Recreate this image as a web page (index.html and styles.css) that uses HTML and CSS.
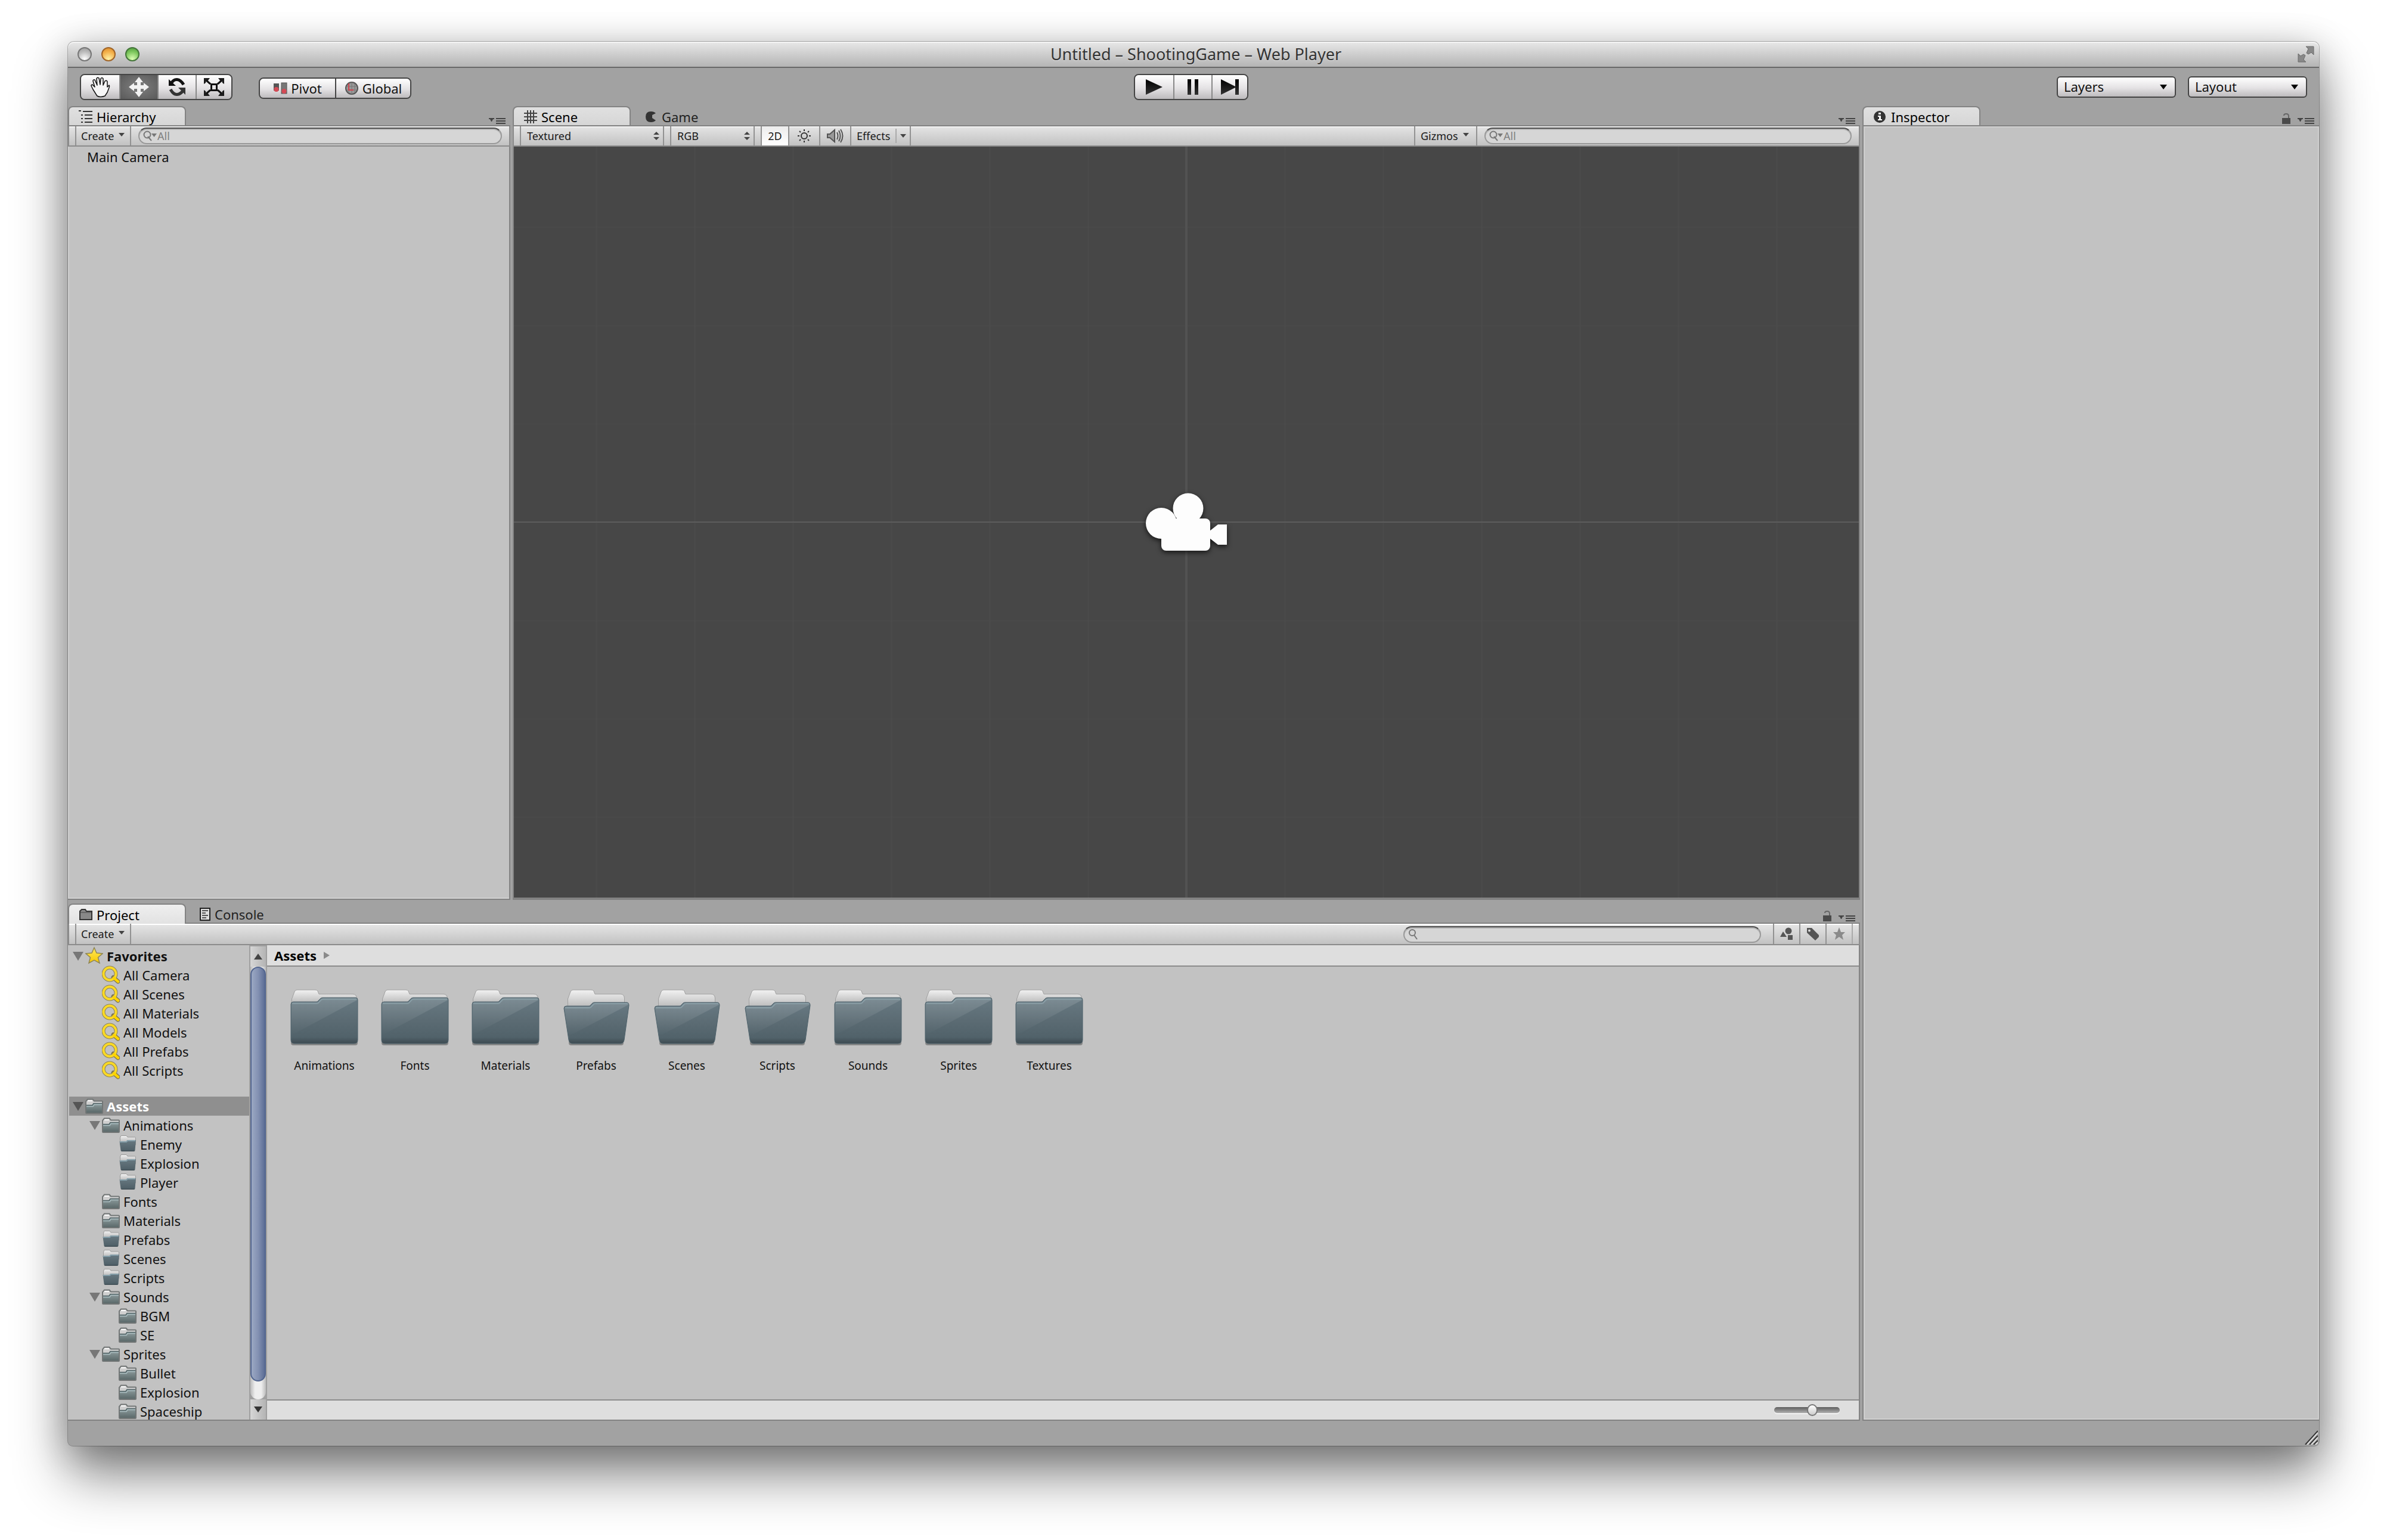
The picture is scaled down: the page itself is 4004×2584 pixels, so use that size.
FILE: index.html
```html
<!DOCTYPE html>
<html lang="en">
<head>
<meta charset="utf-8">
<title>Untitled – ShootingGame – Web Player</title>
<link rel="stylesheet" href="styles.css">
</head>
<body>
<svg class="defs" aria-hidden="true">
  <defs>
    <linearGradient id="paper" x1="0" y1="0" x2="0" y2="1"><stop offset="0" stop-color="#f2f2f2"/><stop offset="1" stop-color="#a4a4a4"/></linearGradient>
    <linearGradient id="slate" x1="0" y1="0" x2="0" y2="1"><stop offset="0" stop-color="#687a83"/><stop offset=".5" stop-color="#5b6b73"/><stop offset=".86" stop-color="#51626a"/><stop offset="1" stop-color="#3d4a51"/></linearGradient>
    <linearGradient id="shine" x1="0" y1="0" x2="0" y2="1"><stop offset="0" stop-color="#fff" stop-opacity=".14"/><stop offset="1" stop-color="#fff" stop-opacity="0"/></linearGradient>
    <linearGradient id="slate-small" x1="0" y1="0" x2="0" y2="1"><stop offset="0" stop-color="#8b9a9b"/><stop offset="1" stop-color="#5b696a"/></linearGradient>
    <linearGradient id="gold" x1="0" y1="0" x2="0" y2="1"><stop offset="0" stop-color="#ffe95c"/><stop offset="1" stop-color="#f7c800"/></linearGradient>
    <linearGradient id="ink" x1="0" y1="0" x2="0" y2="1"><stop offset="0" stop-color="#000"/><stop offset="1" stop-color="#333"/></linearGradient>
  </defs>
  <symbol id="folder" viewBox="0 0 128 128">
    <rect x="8" y="104" width="112" height="8" rx="4" fill="#000" opacity=".3"/>
    <path d="M9.500 50V34L14 22q1-3 4-3H49q3 0 4 2l2 5H112q6 0 6.500 7V50Z" fill="url(#paper)" stroke="#a0a0a0"/>
    <path d="M8 43q0-4 4-4H51q2 0 3-2l3-3q1-2 4-2H117q3 0 3 4V103q0 6-6 6H14q-6 0-6-6Z" fill="url(#slate)" stroke="#4f636c" stroke-width="1"/>
    <path d="M9 43q0-3 3-3H52q2 0 3-2l3-3q1-2 4-2H116q3 0 3 3L9 95Z" fill="url(#shine)"/>
    <path d="M10 41.500H52q2 0 4-3l2-2q1-2 4-2H118" fill="none" stroke="#8fa4ad" stroke-width="2" opacity=".8"/>
  </symbol>
  <symbol id="folder-open" viewBox="0 0 128 128">
    <rect x="18" y="104" width="92" height="8" rx="4" fill="#000" opacity=".3"/>
    <path d="M16.500 60V34L21 22q1-3 4-3H56q3 0 4 2l2 5H105q6 0 6.500 7V60Z" fill="url(#paper)" stroke="#a0a0a0"/>
    <path d="M10 50q0-4 4-4H52q2 0 3-2l2-2q1-2 4-2H115q4 0 4 5L111 103q-1 6-6 6H24q-5 0-6-6Z" fill="url(#slate)" stroke="#4f636c" stroke-width="1"/>
    <path d="M11 50q0-3 3-3H53q2 0 3-2l2-2q1-2 4-2H114q4 0 4 3L17 97Z" fill="url(#shine)"/>
    <path d="M12 49H53q2 0 4-3l2-2q1-2 4-2H117" fill="none" stroke="#8fa4ad" stroke-width="2" opacity=".8"/>
  </symbol>
  <symbol id="folder-sm" viewBox="0 0 30 32">
    <path d="M1 27V8L4 4.500H12.500L15 7.500H28q1 0 1 1V27q0 1-1 1H2q-1 0-1-1Z" fill="#d0d0d0" stroke="#727676" stroke-width="2"/>
    <path d="M2 15H12l2-3H28V27H2Z" fill="url(#slate-small)"/>
    <path d="M2 14.500H12l2-3H28" fill="none" stroke="#4d6063" stroke-width="1.500"/>
    <path d="M2 16.500H13l2-3H28" fill="none" stroke="#a9bcbf" stroke-width="1.500"/>
    <path d="M4 7H12" stroke="#fafafa" stroke-width="2"/>
  </symbol>
  <symbol id="folder-sm-open" viewBox="0 0 30 32">
    <path d="M2.500 17V5L4 1.500H13L15 4H27.500q1 0 1 2V17Z" fill="url(#paper)" stroke="#9a9a9a"/>
    <path d="M1.500 11H13l2-2H29L27.500 26q0 2-2 2H5.500q-2 0-2-2Z" fill="url(#slate)"/>
    <path d="M2 12H13l2-2H28" fill="none" stroke="#86a0ab" stroke-width="2"/>
  </symbol>
  <symbol id="mag" viewBox="0 0 30 32">
    <path d="M19 20L27 27" stroke="#7d7550" stroke-width="7" stroke-linecap="round"/>
    <circle cx="13" cy="14" r="10.500" fill="none" stroke="#8a8260" stroke-width="6"/>
    <circle cx="13" cy="14" r="10.500" fill="none" stroke="#f9d926" stroke-width="4"/>
    <path d="M20 21L27 27" stroke="#fdd400" stroke-width="4.500" stroke-linecap="round"/>
  </symbol>
  <symbol id="open-arrow" viewBox="0 0 22 32"><path d="M1 9H19L10 24Z" fill="currentColor"/></symbol>
  <symbol id="menu" viewBox="0 0 28 18"><path d="M0 8H9V10H7L5 14H4L2 10H0ZM12 8H28V10H12ZM12 12H28V14H12ZM12 16H28V18H12Z" fill="#444"/></symbol>
  <symbol id="lock" viewBox="0 0 14 18"><path d="M0 8H14V18H0Z" fill="#4a4a4a"/><path d="M3 4Q3 1 7 1T11 5V8" fill="none" stroke="#666" stroke-width="2"/></symbol>
  <symbol id="drop" viewBox="0 0 10 6"><path d="M0 0H10L5 6Z" fill="#444"/></symbol>
  <symbol id="find" viewBox="0 0 24 24"><circle cx="7" cy="9" r="5" fill="none" stroke="#777" stroke-width="2"/><path d="M10 13L15 20" stroke="#777" stroke-width="2"/></symbol>
  <symbol id="find-by" viewBox="0 0 24 24"><circle cx="7" cy="10" r="5.500" fill="none" stroke="#777" stroke-width="2"/><path d="M8 13L14 20" stroke="#777" stroke-width="2"/><path d="M14 8H23L18.500 14Z" fill="#777"/></symbol>
</svg>

<div class="window">
  <header class="titlebar">
    <div class="lights">
      <button class="light light-close" aria-label="Close"></button>
      <button class="light light-min" aria-label="Minimize"></button>
      <button class="light light-zoom" aria-label="Zoom"></button>
    </div>
    <h1 class="title">Untitled – ShootingGame – Web Player</h1>
    <button class="full" aria-label="Full screen"><svg width="28" height="28" viewBox="0 0 28 28"><g fill="#888" stroke="#6b6b6b"><path d="M14 1H27V15L23 11L18 14L15 12L18 5Z"/><path d="M1 13L5 17L10 14L13 16L10 23L14 27H1Z"/></g></svg></button>
  </header>

  <div class="toolbar">
    <div class="tool-left">
      <div class="group tools">
        <button class="btn" aria-label="Hand"><svg width="36" height="36" viewBox="0 0 36 36"><path d="M11 30L6 22L3 16Q3 14 5 14L9 18L6 8Q6 5 9 6L13 15L12 4Q13 1 16 3L18 14L19 4Q21 1 23 4L23 15L26 8Q29 6 30 9L30 18L33 15Q34 16 33 19L30 27L26 33Q18 36 13 33Z" fill="#f6f6f6" stroke="#111" stroke-width="1.500" stroke-linejoin="round"/></svg></button>
        <button class="btn btn-on" aria-label="Move"><svg width="36" height="36" viewBox="0 0 36 36"><path d="M18 1L25 10H21V15H26V11L35 18L26 25V21H21V26H25L18 35L11 26H15V21H10V25L1 18L10 11V15H15V10H11Z" fill="#f2f2f2"/></svg></button>
        <button class="btn" aria-label="Rotate"><svg width="36" height="36" viewBox="0 0 36 36"><path d="M8 12Q12 5 18 5.500T29 14" fill="none" stroke="#111" stroke-width="5"/><path d="M4 5V16H16Z" fill="#111"/><path d="M28 24Q24 30 18 30.500T7 22" fill="none" stroke="#333" stroke-width="5"/><path d="M32 31V19H20Z" fill="#333"/></svg></button>
        <button class="btn" aria-label="Scale"><svg width="36" height="36" viewBox="0 0 36 36"><g stroke="#111" stroke-width="3" fill="none"><path d="M4 6L12 13M32 6L24 13M4 30L12 23M32 30L24 23"/><rect x="13.500" y="13.500" width="9" height="10"/></g><path d="M1 3H11L8 7L5 7L4 11L1 13ZM35 3H25L28 7L31 7L32 11L35 13ZM1 33H11L8 29H5L4 25L1 23ZM35 33H25L28 29H31L32 25L35 23Z" fill="#1c1c1c"/></svg></button>
      </div>
      <div class="group modes">
        <button class="btn btn-mode"><svg width="24" height="24" viewBox="0 0 24 24"><rect x="1" y="4" width="9" height="12" fill="#555"/><rect x="14" y="3" width="9" height="18" fill="#777" stroke="#555"/><circle cx="5.500" cy="14" r="4" fill="#d44a55"/><circle cx="18.500" cy="17" r="4" fill="#d44a55"/></svg>Pivot</button>
        <button class="btn btn-mode"><svg width="24" height="24" viewBox="0 0 24 24"><circle cx="12" cy="12" r="10" fill="#999" stroke="#555" stroke-width="2"/><path d="M4 9H20M4 15H20M12 2V22M7 4V20M17 4V20" stroke="#777"/><path d="M7 4V15H15" stroke="#d0454f" stroke-width="2" fill="none"/></svg>Global</button>
      </div>
    </div>
    <div class="group play">
      <button class="btn" aria-label="Play"><svg width="36" height="28" viewBox="0 0 36 28"><path d="M4 1L32 14L4 27Z" fill="url(#ink)"/></svg></button>
      <button class="btn" aria-label="Pause"><svg width="36" height="28" viewBox="0 0 36 28"><path d="M9 1H15V27H9ZM21 1H27V27H21Z" fill="url(#ink)"/></svg></button>
      <button class="btn" aria-label="Step"><svg width="36" height="28" viewBox="0 0 36 28"><path d="M3 1L27 13V1H33V27H27V15L3 27Z" fill="url(#ink)"/></svg></button>
    </div>
    <div class="tool-right">
      <select class="pop" aria-label="Layers"><option>Layers</option></select>
      <select class="pop" aria-label="Layout"><option>Layout</option></select>
    </div>
  </div>

  <main class="docks">
    <div class="dock-left">
      <div class="dock-top">
        <section class="panel">
          <div class="tabs">
            <button class="tab tab-on"><svg width="24" height="24" viewBox="0 0 24 24"><path d="M0 1H4V3H0ZM7 2H23V4H7ZM4 8H7V10H4ZM10 8H23V10H10ZM4 14H7V16H4ZM10 14H23V16H10ZM4 20H7V22H4ZM10 20H23V22H10Z" fill="#333"/></svg>Hierarchy</button>
            <svg class="menu" width="28" height="18"><use href="#menu"/></svg>
          </div>
          <div class="bar bar-search">
            <button class="cell cell-create">Create<svg width="10" height="6"><use href="#drop"/></svg></button>
            <label class="search"><svg width="24" height="24"><use href="#find-by"/></svg><input type="search" placeholder="All" aria-label="Search hierarchy"></label>
          </div>
          <ul class="list"><li>Main Camera</li></ul>
        </section>

        <section class="panel">
          <div class="tabs">
            <button class="tab tab-on"><svg width="24" height="24" viewBox="0 0 24 24"><path d="M7 1V23M12 1V23M17 1V23M1 6H23M1 12H23M1 18H23" stroke="#444" stroke-width="2"/></svg>Scene</button>
            <button class="tab"><svg width="24" height="24" viewBox="0 0 24 24"><path d="M20 6Q17 3 12 3Q3 3 3 12T12 21Q17 21 20 18L14 14V9Z" fill="#333"/></svg>Game</button>
            <svg class="menu" width="28" height="18"><use href="#menu"/></svg>
          </div>
          <div class="bar">
            <select class="cell draw-mode" aria-label="Draw mode"><option>Textured</option></select>
            <select class="cell render-mode" aria-label="Render mode"><option>RGB</option></select>
            <button class="cell cell-2d">2D</button>
            <button class="cell cell-icon" aria-label="Lighting"><svg width="28" height="28" viewBox="0 0 28 28"><g fill="none" stroke="#333" stroke-width="2"><circle cx="14" cy="14" r="5"/><path d="M14 3V6M14 22V25M3 14H6M22 14H25M6 6L8 8M20 20L22 22M22 6L20 8M8 20L6 22"/></g></svg></button>
            <button class="cell cell-icon" aria-label="Audio"><svg width="28" height="28" viewBox="0 0 28 28"><path d="M1 11H5L13 4V24L5 17H1Z" fill="#999" stroke="#555" stroke-width="2"/><path d="M17 8Q20 14 17 20M20 5Q25 14 20 23M23 3Q30 14 23 25" fill="none" stroke="#555" stroke-width="2"/></svg></button>
            <button class="cell cell-effects">Effects<span class="rule"></span><svg width="10" height="6"><use href="#drop"/></svg></button>
            <button class="cell cell-create cell-gizmos">Gizmos<svg width="10" height="6"><use href="#drop"/></svg></button>
            <label class="search search-scene"><svg width="24" height="24"><use href="#find-by"/></svg><input type="search" placeholder="All" aria-label="Search scene"></label>
          </div>
          <div class="view">
            <svg class="camera" width="140" height="104" viewBox="0 0 140 104"><g fill="#fdfdfd"><circle cx="28" cy="54" r="26"/><circle cx="73" cy="29" r="25.500"/><rect x="28" y="46" width="82" height="54" rx="8"/><path d="M109 67L123 56H138V90H123L109 79Z"/></g></svg>
          </div>
        </section>
      </div>

      <section class="panel">
        <div class="tabs">
          <button class="tab tab-on tab-focus"><svg width="24" height="24" viewBox="0 0 24 24"><path d="M2 20V6L5 3H11L13 6H22V20Z" fill="#888" stroke="#333" stroke-width="2"/><path d="M3 8H21" stroke="#444"/></svg>Project</button>
          <button class="tab"><svg width="20" height="24" viewBox="0 0 20 24"><rect x="2" y="2" width="16" height="20" fill="#ddd" stroke="#222" stroke-width="2"/><path d="M5 6H15M5 10H11M5 14H15M5 18H12" stroke="#555" stroke-width="2"/></svg>Console</button>
          <svg class="lock" width="14" height="18"><use href="#lock"/></svg>
          <svg class="menu" width="28" height="18"><use href="#menu"/></svg>
        </div>
        <div class="bar bar-focus">
          <button class="cell cell-create">Create<svg width="10" height="6"><use href="#drop"/></svg></button>
          <label class="search search-project"><svg width="24" height="24"><use href="#find"/></svg><input type="search" aria-label="Search project"></label>
          <div class="filters">
            <button class="cell cell-filter" aria-label="Search by type"><svg width="24" height="24" viewBox="0 0 24 24"><circle cx="15" cy="7" r="5.500" fill="#555"/><path d="M1 17L6 8L12 17ZM14 14H22V22H14Z" fill="#555"/></svg></button>
            <button class="cell cell-filter" aria-label="Search by label"><svg width="24" height="24" viewBox="0 0 24 24"><path fill-rule="evenodd" d="M2 2H10L22 14V17L16 23L2 10ZM6 4.500A2 2 0 1 0 6 8.500A2 2 0 1 0 6 4.500Z" fill="#555"/></svg></button>
            <button class="cell cell-filter" aria-label="Save search"><svg width="24" height="24" viewBox="0 0 24 24"><path d="M12 1L15 9H22L17 14L19 22L12 17L5 22L7 14L2 9H9Z" fill="#8a8a8a"/></svg></button>
          </div>
        </div>
        <div class="project">
          <div class="tree">
            <ul class="rows">
              <li class="row row-head"><svg class="tri" width="22" height="32"><use href="#open-arrow"/></svg><svg width="30" height="32" viewBox="0 0 30 32"><path d="M15 2L19 11L29 12L21.500 18.500L24 28L15 23L6 28L8.500 18.500L1 12L11 11Z" fill="url(#gold)" stroke="#8f8656" stroke-width="1.500"/></svg>Favorites</li>
              <li class="row row-1"><svg width="30" height="32"><use href="#mag"/></svg>All Camera</li>
              <li class="row row-1"><svg width="30" height="32"><use href="#mag"/></svg>All Scenes</li>
              <li class="row row-1"><svg width="30" height="32"><use href="#mag"/></svg>All Materials</li>
              <li class="row row-1"><svg width="30" height="32"><use href="#mag"/></svg>All Models</li>
              <li class="row row-1"><svg width="30" height="32"><use href="#mag"/></svg>All Prefabs</li>
              <li class="row row-1"><svg width="30" height="32"><use href="#mag"/></svg>All Scripts</li>
            </ul>
            <ul class="rows">
              <li class="row row-head row-on"><svg class="tri" width="22" height="32"><use href="#open-arrow"/></svg><svg width="30" height="32"><use href="#folder-sm"/></svg>Assets</li>
              <li class="row row-1t"><svg class="tri" width="22" height="32"><use href="#open-arrow"/></svg><svg width="30" height="32"><use href="#folder-sm"/></svg>Animations</li>
              <li class="row row-2"><svg width="30" height="32"><use href="#folder-sm-open"/></svg>Enemy</li>
              <li class="row row-2"><svg width="30" height="32"><use href="#folder-sm-open"/></svg>Explosion</li>
              <li class="row row-2"><svg width="30" height="32"><use href="#folder-sm-open"/></svg>Player</li>
              <li class="row row-1"><svg width="30" height="32"><use href="#folder-sm"/></svg>Fonts</li>
              <li class="row row-1"><svg width="30" height="32"><use href="#folder-sm"/></svg>Materials</li>
              <li class="row row-1"><svg width="30" height="32"><use href="#folder-sm-open"/></svg>Prefabs</li>
              <li class="row row-1"><svg width="30" height="32"><use href="#folder-sm-open"/></svg>Scenes</li>
              <li class="row row-1"><svg width="30" height="32"><use href="#folder-sm-open"/></svg>Scripts</li>
              <li class="row row-1t"><svg class="tri" width="22" height="32"><use href="#open-arrow"/></svg><svg width="30" height="32"><use href="#folder-sm"/></svg>Sounds</li>
              <li class="row row-2"><svg width="30" height="32"><use href="#folder-sm"/></svg>BGM</li>
              <li class="row row-2"><svg width="30" height="32"><use href="#folder-sm"/></svg>SE</li>
              <li class="row row-1t"><svg class="tri" width="22" height="32"><use href="#open-arrow"/></svg><svg width="30" height="32"><use href="#folder-sm"/></svg>Sprites</li>
              <li class="row row-2"><svg width="30" height="32"><use href="#folder-sm"/></svg>Bullet</li>
              <li class="row row-2"><svg width="30" height="32"><use href="#folder-sm"/></svg>Explosion</li>
              <li class="row row-2"><svg width="30" height="32"><use href="#folder-sm"/></svg>Spaceship</li>
            </ul>
          </div>
          <div class="scroll">
            <button class="scroll-btn" aria-label="Scroll up"><svg width="14" height="10" viewBox="0 0 14 10"><path d="M0 10L7 0L14 10Z" fill="#444"/></svg></button>
            <div class="track"><div class="thumb"></div></div>
            <button class="scroll-btn" aria-label="Scroll down"><svg width="14" height="10" viewBox="0 0 14 10"><path d="M0 0L7 10L14 0Z" fill="#333"/></svg></button>
          </div>
          <div class="browser">
            <nav class="crumbs"><a class="crumb" href="#assets">Assets</a><svg width="10" height="12" viewBox="0 0 10 12"><path d="M0 0L10 6L0 12Z" fill="#8a8a8a"/></svg></nav>
            <ul class="tiles">
              <li class="tile"><svg width="128" height="128"><use href="#folder"/></svg>Animations</li>
              <li class="tile"><svg width="128" height="128"><use href="#folder"/></svg>Fonts</li>
              <li class="tile"><svg width="128" height="128"><use href="#folder"/></svg>Materials</li>
              <li class="tile"><svg width="128" height="128"><use href="#folder-open"/></svg>Prefabs</li>
              <li class="tile"><svg width="128" height="128"><use href="#folder-open"/></svg>Scenes</li>
              <li class="tile"><svg width="128" height="128"><use href="#folder-open"/></svg>Scripts</li>
              <li class="tile"><svg width="128" height="128"><use href="#folder"/></svg>Sounds</li>
              <li class="tile"><svg width="128" height="128"><use href="#folder"/></svg>Sprites</li>
              <li class="tile"><svg width="128" height="128"><use href="#folder"/></svg>Textures</li>
            </ul>
            <div class="foot"><input class="zoom" type="range" min="0" max="100" value="60" aria-label="Icon size"></div>
          </div>
        </div>
      </section>
    </div>

    <section class="panel">
      <div class="tabs">
        <button class="tab tab-on"><svg width="24" height="24" viewBox="0 0 24 24"><circle cx="11" cy="12" r="10" fill="#333"/><path d="M9 5H13V8H9ZM8 10H13V16H15V18H8V16H10V12H8Z" fill="#fff"/></svg>Inspector</button>
        <svg class="lock" width="14" height="18"><use href="#lock"/></svg>
        <svg class="menu" width="28" height="18"><use href="#menu"/></svg>
      </div>
      <div class="empty"></div>
    </section>
  </main>

  <footer class="status"><svg width="22" height="24" viewBox="0 0 22 24"><path d="M1 24L22 1M8 24L22 9M15 24L22 17" stroke="#333" stroke-width="2"/><path d="M4 24L22 4M11 24L22 12M18 24L22 20" stroke="#ddd" stroke-width="2"/></svg></footer>
</div>
</body>
</html>
```
FILE: styles.css
```css
* { box-sizing: border-box; }
html { background: #fff; }
body {
  display: flex;
  height: 100vh;
  margin: 0;
  padding: 70px 114px 158px;
  font: 22px/32px "Noto Sans", sans-serif;
  color: #111;
  overflow: hidden;
}
.defs { position: absolute; width: 0; height: 0; }
button, select, input { font: inherit; color: inherit; margin: 0; padding: 0; border: 0; background: none; border-radius: 0; outline: 0; }
ul { list-style: none; margin: 0; padding: 0; }
svg { flex: none; display: block; }

.window {
  flex: 1;
  min-width: 0;
  display: flex;
  flex-direction: column;
  background: #a2a2a2;
  border-radius: 10px 10px 8px 8px;
  box-shadow: 0 0 0 1px rgba(0,0,0,.25), 0 50px 90px rgba(0,0,0,.46), 0 10px 60px rgba(0,0,0,.24);
}

/* Title bar */
.titlebar {
  display: grid;
  grid-template-columns: 1fr auto 1fr;
  align-items: center;
  height: 44px;
  padding: 0 8px 0 16px;
  border-bottom: 2px solid #686868;
  border-radius: 10px 10px 0 0;
  background: linear-gradient(#e8e8e8, #b4b4b4);
  box-shadow: inset 0 2px 0 #f4f4f4;
}
.lights { display: flex; gap: 16px; }
.light { width: 24px; height: 24px; border: 2px solid #6f6f6f; border-radius: 50%; }
.light-close { background: radial-gradient(circle at 50% 90%, #fff, #bbb 60%, #999); border-color: #777; }
.light-min { background: radial-gradient(circle at 50% 90%, #fff3a8, #f3b04a 60%, #d98a2c); border-color: #a06428; }
.light-zoom { background: radial-gradient(circle at 50% 90%, #dcffb4, #7cc65c 60%, #4b9a38); border-color: #44753a; }
.title { margin: 0; font-size: 27px; line-height: 32px; font-weight: 400; color: #333; text-shadow: 0 1px 0 #e6e6e6; }
.full { justify-self: end; }

/* Main toolbar */
.toolbar {
  display: grid;
  grid-template-columns: 1fr auto 1fr;
  height: 64px;
  padding: 10px 20px 0;
}
.tool-left { display: flex; gap: 44px; }
.tool-right { display: flex; justify-content: flex-end; gap: 20px; padding-top: 4px; }
.group { display: flex; height: 44px; border: 2px solid #444; border-radius: 8px; overflow: hidden; }
.tools { width: 256px; }
.play { width: 192px; margin-right: 8px; }
.modes { width: 256px; height: 36px; margin-top: 6px; }
.btn {
  flex: none;
  width: 64px;
  display: flex;
  align-items: center;
  justify-content: center;
  background: linear-gradient(#fff, #e4e2e4 55%, #bdbbbd);
}
.btn:last-child { flex: 1; width: auto; }
.btn + .btn { border-left: 2px solid #888; }
.btn-on { background: radial-gradient(#808080, #5a5a5a); }
.modes .btn + .btn { border-color: #444; }
.btn-mode { width: 126px; gap: 6px; line-height: 32px; }
.pop {
  appearance: none;
  width: 200px;
  height: 36px;
  padding: 0 12px 2px 10px;
  border: 2px solid #444;
  border-radius: 6px;
  line-height: 30px;
  background: url("data:image/svg+xml,%3Csvg xmlns='http://www.w3.org/2000/svg' width='12' height='8'%3E%3Cpath d='M0 0H12L6 8Z'/%3E%3C/svg%3E") no-repeat right 13px center, linear-gradient(#fff, #e4e2e4 55%, #bdbbbd);
}

/* Docked panels */
.docks { flex: 1; min-height: 0; display: grid; grid-template-columns: 3006fr 766fr; grid-template-rows: minmax(0, 1fr); gap: 4px; }
.dock-left { display: grid; grid-template-rows: minmax(0, 1332fr) minmax(0, 868fr); gap: 6px; min-width: 0; min-height: 0; }
.dock-top { display: grid; grid-template-columns: 742fr 2260fr; grid-template-rows: minmax(0, 1fr); gap: 4px; min-height: 0; }
.panel { display: flex; flex-direction: column; min-width: 0; min-height: 0; }
.tabs { display: flex; height: 34px; padding-right: 8px; border-bottom: 2px solid #838383; flex: none; }
.tab {
  display: flex;
  align-items: center;
  gap: 6px;
  width: 198px;
  height: 32px;
  padding: 2px 0 0 16px;
  border: 2px solid transparent;
  border-bottom: 0;
  border-radius: 8px 8px 0 0;
  line-height: 28px;
  color: #222;
}
.tab-on { color: #000; border-color: #838383; background: linear-gradient(#e0e0e0, #d6d6d6); }
.tab-focus { height: 34px; background: linear-gradient(#efefef, #e2e2e2); }
.tab + .tab { padding-left: 20px; }
.menu { margin: 12px 0 0 auto; }
.lock { margin: 12px 0 0 auto; }
.lock + .menu { margin-left: 12px; }

.bar {
  display: flex;
  flex: none;
  height: 34px;
  padding: 0 10px;
  border: solid #8c8c8c;
  border-width: 0 2px 2px;
  background: linear-gradient(#f0f0f0 2px, #e2e2e2 2px, #c2c2c2);
  font-size: 18px;
}
.bar-focus { height: 36px; background: linear-gradient(#fff 2px, #e4e4e4 2px, #c2c2c2); }
.bar-search { padding-right: 12px; }
.cell { display: flex; align-items: center; border-left: 2px solid #929292; line-height: 30px; color: #1a1a1a; font-size: 18px; }
.cell svg { flex: none; }
.cell-create { gap: 8px; width: 94px; padding-left: 8px; border-right: 2px solid #929292; }
.cell-create svg { margin-bottom: 4px; }
.draw-mode, .render-mode {
  appearance: none;
  border-right: 2px solid #929292;
  padding-left: 10px;
  margin-right: 10px;
  background: url("data:image/svg+xml,%3Csvg xmlns='http://www.w3.org/2000/svg' width='10' height='14'%3E%3Cpath d='M0 5L5 0L10 5ZM0 9L5 14L10 9Z' fill='%23444'/%3E%3C/svg%3E") no-repeat right 6px center;
}
.draw-mode { width: 242px; }
.render-mode { width: 142px; }
.cell-2d { width: 46px; justify-content: center; background: linear-gradient(#ececec, #fff); }
.cell-icon { width: 52px; justify-content: center; }
.cell-effects { width: 102px; padding-left: 9px; border-right: 2px solid #929292; }
.rule { width: 2px; height: 24px; margin: 0 6px 0 9px; background: #aaa; }
.cell-gizmos { width: 106px; margin-left: auto; padding-left: 9px; }
.search {
  flex: 1;
  display: flex;
  align-items: center;
  height: 28px;
  margin: 2px 0 0 12px;
  padding: 0 14px 0 6px;
  border: 2px solid #999;
  border-top-color: #4c4c4c;
  border-radius: 14px;
  background: #d6d6d6;
  box-shadow: inset 0 2px 0 #b4b4b4;
  color: #777;
}
.search input { flex: 1; min-width: 0; height: 22px; line-height: 22px; appearance: none; }
.search input::placeholder { color: #808080; opacity: 1; }
.search-scene { flex: none; width: 616px; margin-right: 2px; }
.search-project { flex: none; width: 600px; margin: 4px 0 0 auto; height: 28px; }
.filters { display: flex; margin-left: 20px; border-right: 2px solid #aaa; }
.cell-filter { width: 44px; justify-content: center; }

.list { flex: 1; padding: 1px 32px; border: 2px solid #838383; border-width: 0 2px 2px 0; background: #c2c2c2; box-shadow: inset 2px -2px 0 #cfcfcf; }
.view {
  flex: 1;
  display: flex;
  align-items: center;
  justify-content: center;
  border: 2px solid #838383;
  border-top: 0;
  border-bottom-width: 4px;
  background:
    linear-gradient(#525252, #525252) center / 4px 100% no-repeat,
    linear-gradient(#5c5c5c, #5c5c5c) center / 100% 2px no-repeat,
    linear-gradient(90deg, transparent 82px, #4b4b4b 82px, #4b4b4b 84px, transparent 84px) center / 165px 100%,
    linear-gradient(transparent 82px, #494949 82px, #494949 84px, transparent 84px) center / 100% 165px,
    #474747;
}
.camera { overflow: visible; filter: drop-shadow(0 3px 4px rgba(0,0,0,.7)); }
.empty { flex: 1; border: solid #838383; border-width: 0 0 2px 2px; background: #c2c2c2; box-shadow: inset 0 0 0 2px #cfcfcf; }

/* Project browser */
.project { flex: 1; min-height: 0; display: flex; border: solid #838383; border-width: 0 2px 2px 0; background: #c2c2c2; }
.tree { flex: none; width: 304px; padding: 2px 0 0 2px; overflow: hidden; }
.rows + .rows { margin-top: 28px; }
.row { display: flex; height: 32px; line-height: 33px; padding-left: 5px; white-space: nowrap; }
.row svg { margin-right: 6px; }
.row .tri { margin-right: 0; color: #777; }
.row-head { font-weight: 700; }
.row-on { background: #8f8f8f; color: #fff; }
.row-on .tri { color: #555; }
.row-1t { padding-left: 33px; }
.row-1 { padding-left: 55px; }
.row-2 { padding-left: 83px; }

.scroll { display: flex; flex-direction: column; width: 30px; padding: 2px 2px 0; background: #a0a0a0; }
.scroll-btn { display: flex; align-items: center; justify-content: center; height: 34px; flex: none; background: linear-gradient(90deg, #d6d6d6, #b4b4b4); }
.track { flex: 1; padding-bottom: 30px; border-radius: 0 0 13px 13px; background: linear-gradient(90deg, #bbb, #eee 30%, #eee 70%, #bbb); }
.thumb { height: 100%; border: 2px solid #52658f; border-radius: 13px; background: linear-gradient(90deg, #9ba8c3, #8391b2 50%, #5c6d95); }

.browser { flex: 1; min-width: 0; display: flex; flex-direction: column; }
.crumbs { display: flex; align-items: center; gap: 12px; height: 36px; padding: 0 12px; border-bottom: 2px solid #8c8c8c; background: #dedede; }
.crumb { color: #000; font-weight: 700; text-decoration: none; line-height: 32px; }
.tiles { flex: 1; display: flex; flex-wrap: wrap; align-content: flex-start; gap: 24px; padding: 20px 32px; }
.tile { display: flex; flex-direction: column; align-items: center; gap: 6px; width: 128px; font-size: 19px; line-height: 24px; }
.foot { display: flex; justify-content: flex-end; align-items: center; height: 34px; padding: 0 32px 0 0; border-top: 2px solid #8c8c8c; background: #dedede; }
.zoom { appearance: none; width: 110px; height: 10px; border-radius: 5px; background: linear-gradient(#5e5e5e, #b0b0b0); box-shadow: 0 2px 0 #f2f2f2; }
.zoom::-webkit-slider-thumb { appearance: none; width: 18px; height: 20px; border: 2px solid #777; border-radius: 50%; background: linear-gradient(#fff, #ccc); }

.status { display: flex; justify-content: flex-end; align-items: flex-end; height: 42px; padding: 0 2px 2px; flex: none; }
```
